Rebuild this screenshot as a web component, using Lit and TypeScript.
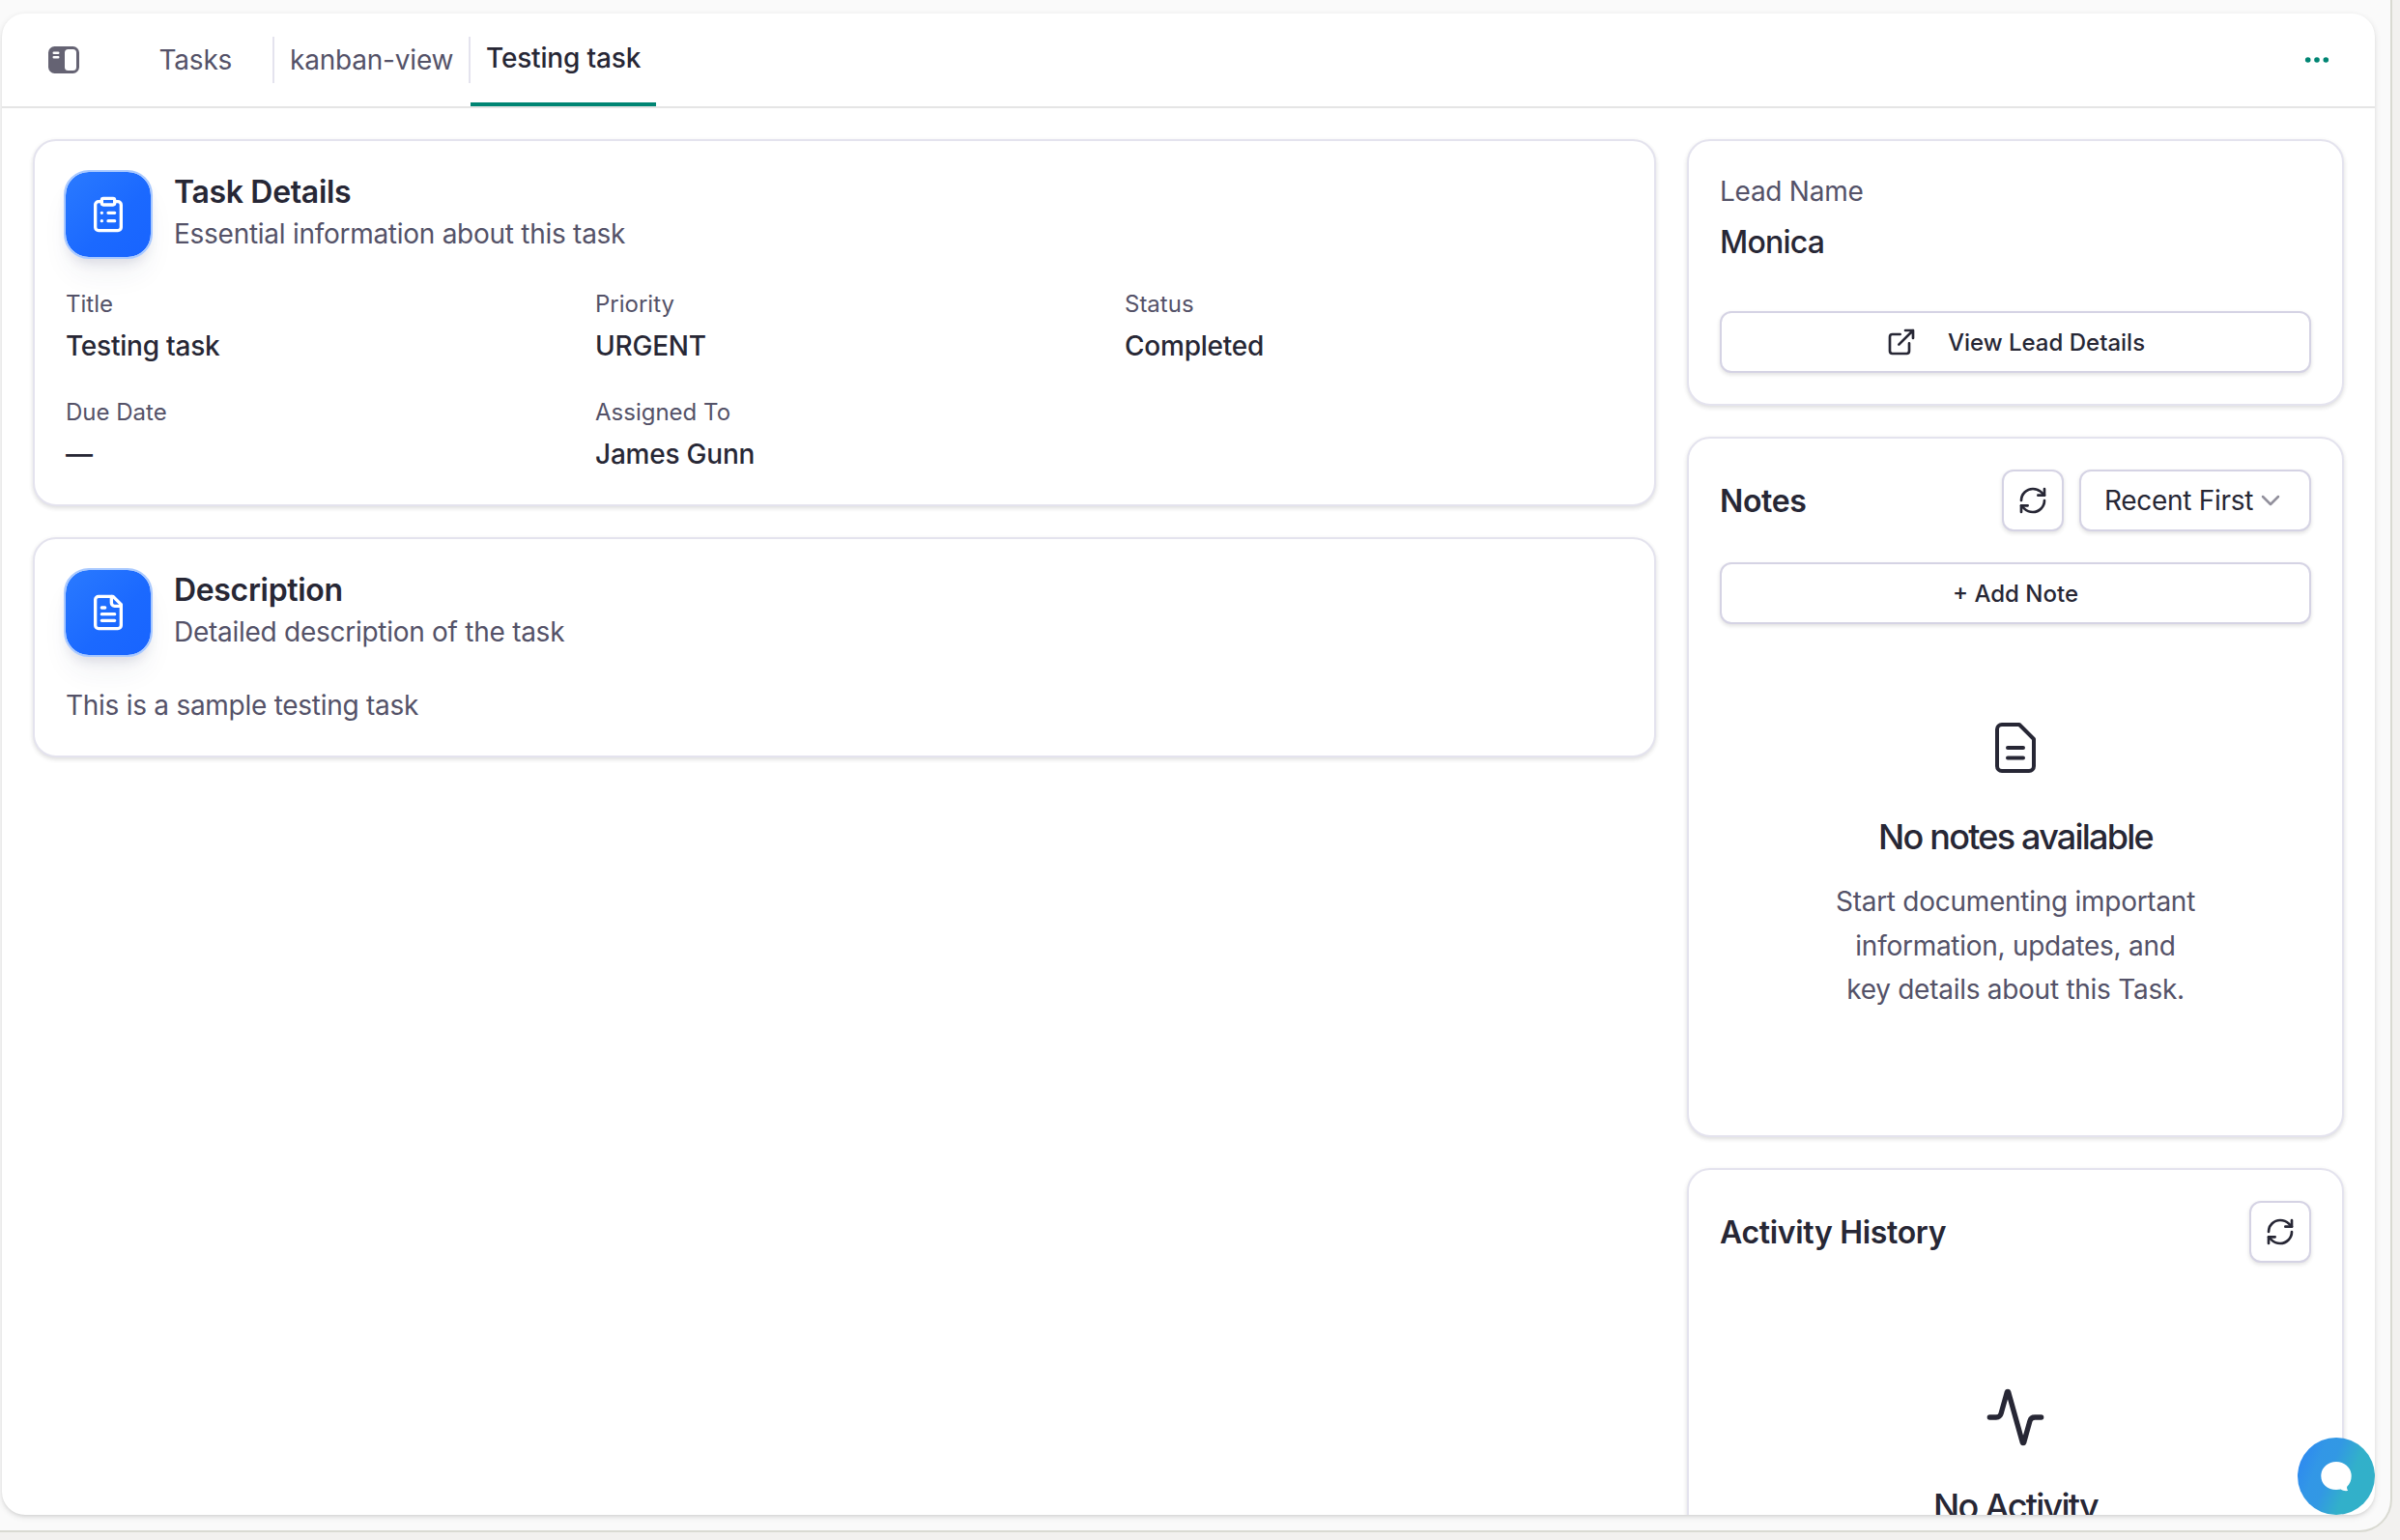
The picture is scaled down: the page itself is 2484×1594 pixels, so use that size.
import { LitElement, html, css, svg } from "lit";
import { customElement } from "lit/decorators.js";

const stroked = (size: number, width: number, body: unknown) => html`<svg
  width=${size} height=${size} viewBox="0 0 24 24" fill="none" stroke="currentColor"
  stroke-width=${width} stroke-linecap="round" stroke-linejoin="round">${body}</svg>`;

const refreshPaths = svg`<path d="M3 12a9 9 0 0 1 9-9 9.75 9.75 0 0 1 6.74 2.74L21 8"/><path d="M21 3v5h-5"/><path d="M21 12a9 9 0 0 1-9 9 9.75 9.75 0 0 1-6.74-2.74L3 16"/><path d="M8 16H3v5"/>`;
const clipboardPaths = svg`<rect x="8" y="2" width="8" height="4" rx="1"/><path d="M16 4h2a2 2 0 0 1 2 2v14a2 2 0 0 1-2 2H6a2 2 0 0 1-2-2V6a2 2 0 0 1 2-2h2"/><path d="M12 11h4M12 16h4M8 11h.01M8 16h.01"/>`;
const filePaths = svg`<path d="M15 2H6a2 2 0 0 0-2 2v16a2 2 0 0 0 2 2h12a2 2 0 0 0 2-2V7Z"/><path d="M14 2v4a2 2 0 0 0 2 2h4M10 9H8M16 13H8M16 17H8"/>`;
const externalPaths = svg`<path d="M15 3h6v6M10 14 21 3"/><path d="M18 13v6a2 2 0 0 1-2 2H5a2 2 0 0 1-2-2V8a2 2 0 0 1 2-2h6"/>`;

const fields = [
  ["Title", "Testing task"],
  ["Priority", "URGENT"],
  ["Status", "Completed"],
  ["Due Date", "—"],
  ["Assigned To", "James Gunn"],
];

@customElement("app-root")
export class AppRoot extends LitElement {
  static styles = css`
    :host { display: block; width: 2484px; height: 1594px; overflow: hidden; background: #f2f1ef;
      font-family: Inter, "Liberation Sans", sans-serif; color: #272735; }
    * { box-sizing: border-box; }
    svg { display: block; flex: none; }
    .frame { width: 2476px; height: 1586px; background: #fafafa; border: solid #d9dad2; border-width: 0 2px 2px 0;
      border-radius: 0 0 34px 0; padding: 14px 16px 0 2px; }
    .panel { position: relative; height: 1554px; background: #fff; border-radius: 24px;
      box-shadow: 0 2px 6px rgba(0,0,0,.12), 0 2px 4px -2px rgba(0,0,0,.12); }
    .clip { height: 100%; border-radius: 24px; overflow: hidden; display: flex; flex-direction: column; }
    .header { height: 98px; flex: none; border-bottom: 2px solid #e5e5e5; display: flex; color: #545268; font-size: 28px; }
    .toggle { margin: 32px 0 0 46px; width: 36px; height: 32px; color: #656373; }
    .tab { height: 48px; margin-top: 24px; line-height: 49px; border-right: 2px solid #e4e3ee; white-space: nowrap; letter-spacing: -.2px; }
    .tasks { width: 200px; padding-left: 80.5px; }
    .kanban { width: 203px; padding-left: 16px; }
    .current { width: 192px; height: 96px; border-bottom: 4px solid #008573; padding-left: 16px; line-height: 93px;
      font-weight: 500; color: #272735; letter-spacing: -.17px; white-space: nowrap; }
    .dots { margin: 32px 44px 0 auto; color: #008573; }
    .content { flex: 1; min-height: 0; padding: 32px; display: flex; gap: 32px; align-items: flex-start; }
    .main { flex: 1; display: grid; gap: 32px; }
    .side { width: 680px; display: grid; gap: 32px; }
    .card { border: 2px solid #e4e3ee; border-radius: 24px; background: #fff; padding: 32px;
      box-shadow: 0 2px 4px rgba(0,0,0,.1), 0 2px 6px rgba(0,0,0,.04); }
    .details { height: 380px; }
    .description { height: 228px; }
    .lead { height: 276px; }
    .notes { height: 725px; }
    .activity { height: 640px; }
    .head { display: flex; gap: 24px; align-items: center; height: 88px; }
    .headtext { padding-bottom: 4px; }
    .tile { width: 92px; height: 92px; margin: -2px; flex: none; border-radius: 26px; border: 2px solid #a9c9ff; color: #fff;
      background: linear-gradient(135deg, #2a7aff 0%, #1b69ff 58%, #1864ff 100%) padding-box; display: grid; place-items: center;
      box-shadow: 0 20px 30px -6px rgba(40,60,100,.07), 0 8px 12px -4px rgba(40,40,90,.12); }
    .title { font-size: 32px; line-height: 44px; font-weight: 600; letter-spacing: -.33px; }
    .sub { font-size: 28px; line-height: 42px; color: #545268; letter-spacing: -.27px; }
    .grid { display: grid; grid-template-columns: repeat(3, 1fr); column-gap: 32px; row-gap: 32px; margin-top: 32px; }
    .label { font-size: 24px; line-height: 34px; color: #545268; }
    .value { font-size: 28px; line-height: 38px; font-weight: 500; margin: 7px 0 1px; letter-spacing: -.22px; }
    .body { font-size: 28px; line-height: 40px; color: #545268; margin-top: 32px; letter-spacing: -.27px; }
    .leadlabel { font-size: 28px; line-height: 40px; color: #545268; letter-spacing: -.26px; }
    .leadname { font-size: 32px; line-height: 44px; font-weight: 500; margin-top: 11px; letter-spacing: -.8px; }
    .button { height: 64px; border: 2px solid #d5d3e4; border-radius: 12px; background: #fff; display: flex;
      align-items: center; justify-content: center; font-size: 24px; font-weight: 500;
      box-shadow: 0 2px 4px rgba(0,0,0,.12); white-space: nowrap; }
    .view { margin: 49px 0 0; gap: 32px; }
    .row { display: flex; align-items: center; gap: 16px; height: 64px; }
    .row .title { flex: 1; padding-top: 2px; }
    .square { width: 64px; }
    .select { width: 240px; font-size: 28px; font-weight: 400; gap: 7px; padding-right: 5px; letter-spacing: -.3px; }
    .select svg { color: #92909c; }
    .add { margin-top: 32px; }
    .empty { display: flex; flex-direction: column; align-items: center; text-align: center; }
    .emptynotes { margin-top: 96px; }
    .emptyactivity { margin-top: 128px; }
    .emptytitle { font-size: 36px; line-height: 50px; font-weight: 500; letter-spacing: -1.78px; margin-top: 35px; white-space: nowrap; }
    .emptytext { font-size: 28px; line-height: 45.5px; color: #545268; margin-top: 20px; white-space: nowrap; letter-spacing: -.27px; }
    .chat { position: absolute; right: 0; bottom: 0; width: 80px; height: 80px; border-radius: 50%;
      background: linear-gradient(112deg, #2b82f6 0%, #3297e6 28%, #3298e4 42%, #32b0ca 64%, #32b0c8 100%); display: grid; place-items: center; }
  `;

  render() {
    return html`<div class="frame"><div class="panel"><div class="clip">
      <div class="header">
        <svg class="toggle" viewBox="0 0 36 32" fill="currentColor"><rect x="2" y="2" width="32" height="28" rx="6.500"/><rect x="19" y="5" width="12" height="22" rx="3.500" fill="#fff"/><path d="M7.800 8.700h4.400M7.800 13.200h4.400" stroke="#fff" stroke-width="2.600" stroke-linecap="round"/></svg>
        <div class="tab tasks">Tasks</div>
        <div class="tab kanban">kanban-view</div>
        <div class="current">Testing task</div>
        <svg class="dots" width="32" height="32" viewBox="0 0 32 32" fill="currentColor"><circle cx="6.700" cy="16" r="2.800"/><circle cx="16" cy="16" r="2.800"/><circle cx="25.300" cy="16" r="2.800"/></svg>
      </div>
      <div class="content">
        <div class="main">
          <div class="card details">
            <div class="head"><div class="tile">${stroked(40, 2, clipboardPaths)}</div>
              <div class="headtext"><div class="title">Task Details</div><div class="sub">Essential information about this task</div></div></div>
            <div class="grid">${fields.map(([l, v]) => html`<div><div class="label">${l}</div><div class="value">${v}</div></div>`)}</div>
          </div>
          <div class="card description">
            <div class="head"><div class="tile">${stroked(40, 2, filePaths)}</div>
              <div class="headtext"><div class="title">Description</div><div class="sub">Detailed description of the task</div></div></div>
            <div class="body">This is a sample testing task</div>
          </div>
        </div>
        <div class="side">
          <div class="card lead">
            <div class="leadlabel">Lead Name</div>
            <div class="leadname">Monica</div>
            <div class="button view">${stroked(32, 2, externalPaths)}<span>View Lead Details</span></div>
          </div>
          <div class="card notes">
            <div class="row"><div class="title">Notes</div>
              <div class="button square">${stroked(32, 2, refreshPaths)}</div>
              <div class="button select"><span>Recent First</span><svg width="22" height="22" viewBox="0 0 22 22" fill="none" stroke="currentColor" stroke-width="2.5" stroke-linecap="round" stroke-linejoin="round"><path d="M3 7l8 8 8-8"/></svg></div>
            </div>
            <div class="button add">+ Add Note</div>
            <div class="empty emptynotes">
              <svg width="64" height="64" viewBox="0 0 64 64" fill="none" stroke="currentColor" stroke-width="4" stroke-linecap="round" stroke-linejoin="round"><path d="M18 8h18l15 15v28a5 5 0 0 1-5 5H18a5 5 0 0 1-5-5V13a5 5 0 0 1 5-5z"/><path d="M24 32h16M24 42.600h16"/></svg>
              <div class="emptytitle">No notes available</div>
              <div class="emptytext">Start documenting important<br>information, updates, and<br>key details about this Task.</div>
            </div>
          </div>
          <div class="card activity">
            <div class="row"><div class="title">Activity History</div><div class="button square">${stroked(32, 2, refreshPaths)}</div></div>
            <div class="empty emptyactivity">
              ${stroked(64, 2, svg`<path d="M22 12h-2.48a2 2 0 0 0-1.93 1.46l-2.35 8.36a.25.25 0 0 1-.48 0L9.24 2.18a.25.25 0 0 0-.48 0l-2.35 8.36A2 2 0 0 1 4.49 12H2"/>`)}
              <div class="emptytitle">No Activity</div>
            </div>
          </div>
        </div>
      </div></div>
      <div class="chat"><svg width="36" height="36" viewBox="0 0 36 36" fill="#fff"><path d="M18 3C9 3 2.300 9.500 2.300 17.700S9 32 18 32c1.700 0 3.300-.1 4.700-.4 2 1.400 4.600 1.800 7.500 1.400-1-1.300-1.400-2.700-1-4.300 2.800-2.700 4.500-6.500 4.500-11C33.700 9.500 27 3 18 3z"/></svg></div>
    </div></div>`;
  }
}
